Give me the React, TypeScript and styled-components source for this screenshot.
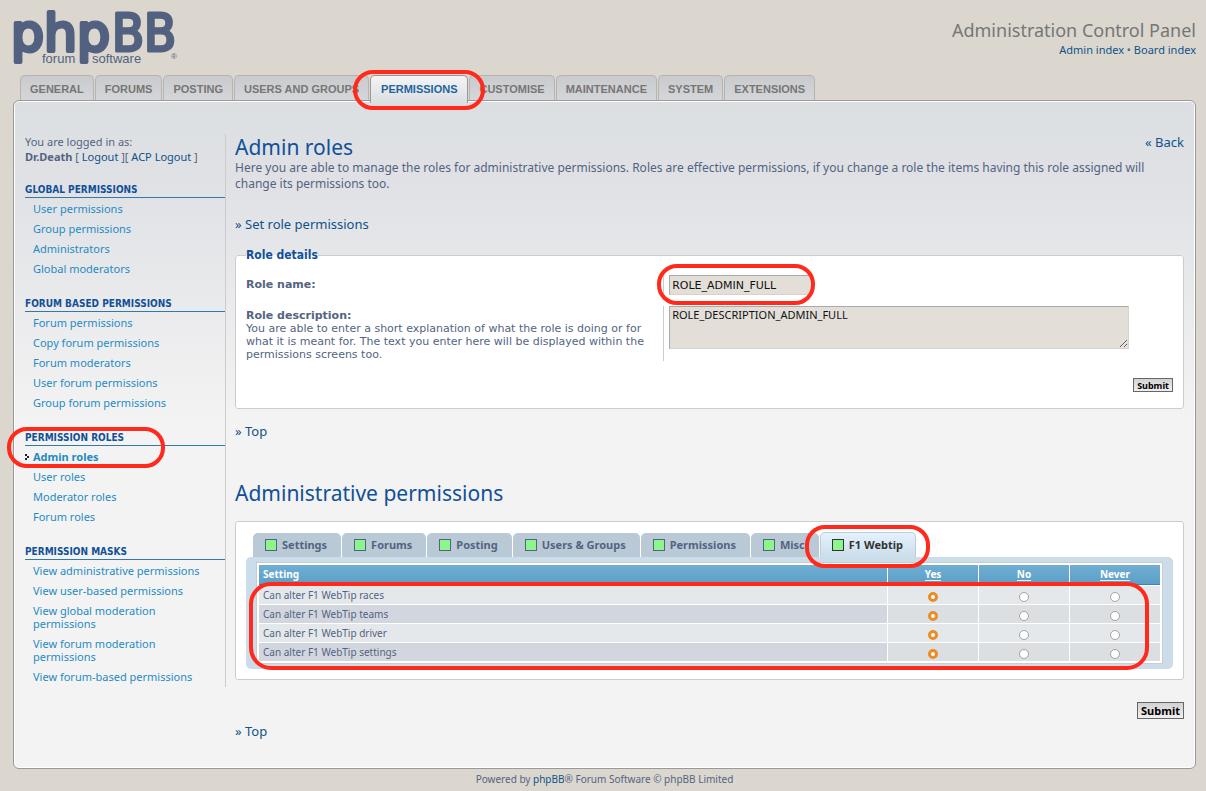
import React from "react";
import styled, { createGlobalStyle, css } from "styled-components";

const humanist = '"Noto Sans", "Open Sans", sans-serif';
const wide = '"DejaVu Sans", sans-serif';
const condensed = '"DejaVu Sans Condensed", "DejaVu Sans", sans-serif';
const arial = '"Liberation Sans", Arial, sans-serif';

const color = {
  page: "#dbd7cf",
  text: "#536482",
  link: "#105289",
  heading: "#115098",
  menuLink: "#1f8bc4",
  border: "#cccccc",
  mark: "#ff2a1c",
};

const GlobalStyle = createGlobalStyle`
  *, *::before, *::after { box-sizing: border-box; }
  body {
    margin: 0;
    background: ${color.page};
    color: ${color.text};
    font: 12px/16px ${humanist};
  }
  a { color: ${color.link}; text-decoration: none; }
  h1, h2, h3, p, ul, dl, dd { margin: 0; padding: 0; }
  ul { list-style: none; }
`;

const Page = styled.div`
  padding: 10px 10px 0 13px;
`;

const Header = styled.header`
  display: flex;
  justify-content: space-between;
  align-items: flex-start;
  height: 65px;
`;

const LogoLink = styled.a`
  display: block;
  line-height: 0;
`;

const HeaderInfo = styled.div`
  padding-top: 9px;
  text-align: right;
  font-size: 11px;
`;

const PanelTitle = styled.h1`
  color: #767676;
  font-size: 18px;
  font-weight: 400;
  line-height: 23px;
`;

const MainTabs = styled.ul`
  display: flex;
  gap: 1px;
  padding-left: 7px;
  height: 25px;
`;

const MainTabItem = styled.li`
  position: relative;
`;

const MainTabLink = styled.a<{ $active?: boolean }>`
  display: block;
  height: 25px;
  padding: 0 9px;
  border: 1px solid #b6b4b1;
  border-bottom: 0;
  border-radius: 5px 5px 0 0;
  background: linear-gradient(#c9cacc, #d5d6da);
  color: #767676;
  font: bold 11px/27px ${arial};
  text-transform: uppercase;
  white-space: nowrap;
  ${(p) =>
    p.$active &&
    css`
      position: relative;
      z-index: 1;
      height: 28px;
      padding: 0 10px;
      border-color: #999999;
      background: linear-gradient(#f4f4f5, #dbdfe2);
      color: #23649f;
    `}
`;

/* Outline that draws attention to a control. */
const Mark = styled.span<{ $inset: string; $radius?: number }>`
  position: absolute;
  inset: ${(p) => p.$inset};
  z-index: 3;
  border: 4px solid ${color.mark};
  border-radius: ${(p) => p.$radius ?? 20}px;
  pointer-events: none;
`;

const Panel = styled.div`
  display: flex;
  gap: 9px;
  min-height: 669px;
  padding: 33px 11px 27px;
  border: 1px solid #999999;
  border-radius: 6px;
  box-shadow: inset 0 0 0 1px #ffffff;
  background: linear-gradient(#dbdfe2, #e0e1e5 80px, #f3f3f3 320px);
`;

const Sidebar = styled.nav`
  flex: 0 0 201px;
  align-self: flex-start;
  border-right: 1px solid ${color.border};
  font-size: 11px;
`;

const Account = styled.p`
  margin-bottom: 18px;
  line-height: 15px;
`;

const MenuGroup = styled.section`
  & + & {
    margin-top: 17px;
  }
`;

const MenuTitle = styled.h3`
  margin-bottom: 1px;
  border-bottom: 1px solid #327aa5;
  color: ${color.heading};
  font: bold 10px/15px ${condensed};
  text-transform: uppercase;
`;

const MenuItem = styled.li<{ $current?: boolean }>`
  position: relative;
  padding: 3px 8px 4px;
  line-height: 13px;
  a {
    color: ${color.menuLink};
    font-weight: ${(p) => (p.$current ? 700 : 400)};
  }
`;

const CurrentArrow = styled.svg`
  position: absolute;
  left: 0;
  top: 7px;
`;

const Marked = styled.div`
  position: relative;
`;

const Main = styled.main`
  flex: 1;
  min-width: 0;
`;

const TitleRow = styled.div`
  display: flex;
  justify-content: space-between;
  align-items: flex-start;
`;

const Title = styled.h2`
  color: ${color.heading};
  font-size: 21px;
  font-weight: 400;
  line-height: 26px;
`;

const JumpLink = styled.a`
  font-size: 13px;
`;

const Row = styled.div<{ $top?: number; $end?: boolean }>`
  display: flex;
  justify-content: ${(p) => (p.$end ? "flex-end" : "flex-start")};
  margin-top: ${(p) => p.$top ?? 0}px;
`;

const Fieldset = styled.fieldset`
  min-width: 0;
  margin: 15px 0 0;
  padding: 10px;
  border: 1px solid ${color.border};
  border-radius: 3px;
  background: #ffffff;
`;

const RoleFieldset = styled(Fieldset)`
  padding: 12px 10px 16px;
`;

const Legend = styled.legend`
  padding: 0;
  color: ${color.heading};
  font: bold 12px/16px ${condensed};
`;

const Field = styled.div`
  display: flex;
  align-items: flex-start;
  & + & {
    margin-top: 11px;
  }
`;

const FieldLabel = styled.div`
  flex: 0 0 45%;
  padding: 3px 12px 0 0;
  font: 11px/13px ${wide};
  label {
    display: block;
    font-weight: 700;
  }
`;

const FieldValue = styled.div`
  position: relative;
  flex: 1;
  align-self: stretch;
  padding-left: 5px;
  border-left: 1px solid ${color.border};
`;

const inputSkin = css`
  display: block;
  margin: 0;
  border: 1px solid #d5d3cf;
  border-top-color: #aaaaaa;
  border-left-color: #aaaaaa;
  border-radius: 0;
  background: #e3dfd8;
  color: #111111;
`;

const TextInput = styled.input`
  ${inputSkin}
  width: 143px;
  height: 20px;
  padding: 2px;
  font: 11px/14px ${wide};
`;

const TextArea = styled.textarea`
  ${inputSkin}
  width: 460px;
  max-width: 100%;
  height: 43px;
  padding: 1px 2px;
  font: 11px/14px ${humanist};
`;

const Submit = styled.button<{ $small?: boolean }>`
  height: ${(p) => (p.$small ? 14 : 17)}px;
  padding: 0 3px;
  border: 1px solid #666666;
  border-radius: 0;
  background: linear-gradient(#d2d2d2, #efefef);
  color: #000000;
  font: bold ${(p) => (p.$small ? "9px/11px" : "11px/14px")} ${humanist};
`;

const CategoryTabs = styled.ul`
  display: flex;
  gap: 1px;
  height: 25px;
  padding: 1px 7px 0;
`;

const CategoryTab = styled.li`
  position: relative;
`;

const CategoryLink = styled.a<{ $active?: boolean }>`
  display: flex;
  align-items: center;
  gap: 5px;
  height: 24px;
  padding: 0 14px 0 12px;
  border-radius: 5px 5px 0 0;
  background: #b9c9d6;
  color: ${color.text};
  font-size: 11px;
  font-weight: 700;
  white-space: nowrap;
  ${(p) =>
    p.$active &&
    css`
      height: 26px;
      margin-top: -1px;
      padding: 0 12px 2px 11px;
      border: 1px solid #c2cdd7;
      border-bottom: 0;
      background: linear-gradient(#e3f2fd, #cbdcea);
      color: #333333;
    `}
`;

const Swatch = styled.span`
  width: 12px;
  height: 12px;
  border: 1px solid currentColor;
  background: #8cf58c;
`;

const TableFrame = styled.div`
  position: relative;
  padding: 5px 10px;
  border-radius: 5px;
  background: #cbdcea;
`;

const PermissionTable = styled.table`
  width: 100%;
  padding: 1px;
  border: 1px solid ${color.border};
  border-spacing: 1px;
  background: #ffffff;
  table-layout: fixed;
`;

const HeadCell = styled.th<{ $option?: boolean }>`
  width: ${(p) => (p.$option ? "90px" : "auto")};
  height: 20px;
  padding: 0 4px;
  border-bottom: 1px solid #3d83ad;
  background: linear-gradient(#70aed3, #5c9fc6);
  color: #ffffff;
  font: bold 10px/19px ${humanist};
  text-align: ${(p) => (p.$option ? "center" : "left")};
  a {
    display: inline-block;
    border-bottom: 1px solid #e8f1f7;
    color: #ffffff;
    line-height: 12px;
  }
`;

const BodyRow = styled.tr`
  --name: #e4e8eb;
  --option: #e4e8eb;
  &:nth-child(even) {
    --name: #d2d6de;
    --option: #dbdfe2;
  }
`;

const NameCell = styled.td`
  height: 18px;
  padding: 0 4px;
  background: var(--name);
  font: 10px/18px ${humanist};
`;

const OptionCell = styled.td`
  height: 18px;
  padding: 2px 0 0;
  background: var(--option);
  line-height: 0;
  text-align: center;
`;

const Radio = styled.input`
  appearance: none;
  width: 10px;
  height: 10px;
  margin: 1px 0 0;
  border: 1px solid #a3a3a3;
  border-radius: 50%;
  background: #ffffff;
  vertical-align: middle;
  &:checked {
    border: 3px solid #ec8c25;
  }
`;

const Footer = styled.footer`
  padding: 3px 0 4px;
  font-size: 10px;
  line-height: 15px;
  text-align: center;
`;

const Logo = () => (
  <svg width="168" height="56" viewBox="0 0 168 56" overflow="visible" role="img" aria-label="phpBB forum software">
    <g fill="#52617f">
      <g fontSize="52" stroke="#52617f" strokeLinejoin="round">
        <text x="-2" y="41" fontFamily="DejaVu Sans" strokeWidth="4">
          php
        </text>
        <text x="99" y="41" fontFamily="DejaVu Sans Condensed" strokeWidth="3">
          BB
        </text>
      </g>
      <g fontFamily="Liberation Sans">
        <text x="29" y="53" fontSize="13">
          forum
        </text>
        <text x="79" y="53" fontSize="13">
          software
        </text>
        <text x="158" y="49" fontSize="8">
          ®
        </text>
      </g>
    </g>
  </svg>
);

const mainTabs = [
  "General",
  "Forums",
  "Posting",
  "Users and Groups",
  "Permissions",
  "Customise",
  "Maintenance",
  "System",
  "Extensions",
];

const menu = [
  {
    title: "Global permissions",
    items: ["User permissions", "Group permissions", "Administrators", "Global moderators"],
  },
  {
    title: "Forum based permissions",
    items: [
      "Forum permissions",
      "Copy forum permissions",
      "Forum moderators",
      "User forum permissions",
      "Group forum permissions",
    ],
  },
  {
    title: "Permission roles",
    items: ["Admin roles", "User roles", "Moderator roles", "Forum roles"],
  },
  {
    title: "Permission masks",
    items: [
      "View administrative permissions",
      "View user-based permissions",
      "View global moderation permissions",
      "View forum moderation permissions",
      "View forum-based permissions",
    ],
  },
];

const categories = ["Settings", "Forums", "Posting", "Users & Groups", "Permissions", "Misc", "F1 Webtip"];
const options = ["Yes", "No", "Never"];
const permissions = ["races", "teams", "driver", "settings"].map((n) => `Can alter F1 WebTip ${n}`);

export default function App() {
  return (
    <>
      <GlobalStyle />
      <Page>
        <Header>
          <LogoLink href="#">
            <Logo />
          </LogoLink>
          <HeaderInfo>
            <PanelTitle>Administration Control Panel</PanelTitle>
            <p>
              <a href="#">Admin index</a> • <a href="#">Board index</a>
            </p>
          </HeaderInfo>
        </Header>

        <MainTabs>
          {mainTabs.map((tab) => {
            const active = tab === "Permissions";
            return (
              <MainTabItem key={tab}>
                <MainTabLink href="#" $active={active}>
                  {tab}
                </MainTabLink>
                {active && <Mark $inset="-5px -17px -10px" />}
              </MainTabItem>
            );
          })}
        </MainTabs>

        <Panel>
          <Sidebar>
            <Account>
              You are logged in as:
              <br />
              <strong>Dr.Death</strong> [ <a href="#">Logout</a> ][ <a href="#">ACP Logout</a> ]
            </Account>
            {menu.map((group) => (
              <MenuGroup key={group.title}>
                <Marked>
                  <MenuTitle>{group.title}</MenuTitle>
                  {group.title === "Permission roles" && <Mark $inset="-3px 60px -22px -18px" />}
                </Marked>
                <ul>
                  {group.items.map((item) => {
                    const current = item === "Admin roles";
                    return (
                      <MenuItem key={item} $current={current}>
                        {current && (
                          <CurrentArrow width="5" height="7" viewBox="0 0 5 7" aria-hidden="true">
                            <path d="M0 0h2v2H0zM2 2h2v2H2zM0 4h2v2H0z" fill="#222222" />
                          </CurrentArrow>
                        )}
                        <a href="#">{item}</a>
                      </MenuItem>
                    );
                  })}
                </ul>
              </MenuGroup>
            ))}
          </Sidebar>

          <Main>
            <TitleRow>
              <Title>Admin roles</Title>
              <JumpLink href="#">« Back</JumpLink>
            </TitleRow>
            <p>
              Here you are able to manage the roles for administrative permissions. Roles are effective permissions, if
              you change a role the items having this role assigned will change its permissions too.
            </p>
            <Row $top={24}>
              <JumpLink href="#">» Set role permissions</JumpLink>
            </Row>

            <RoleFieldset>
              <Legend>Role details</Legend>
              <Field>
                <FieldLabel>
                  <label htmlFor="role-name">Role name:</label>
                </FieldLabel>
                <FieldValue>
                  <TextInput id="role-name" defaultValue="ROLE_ADMIN_FULL" />
                  <Mark $inset="-11px auto -10px -7px" style={{ width: 158 }} />
                </FieldValue>
              </Field>
              <Field>
                <FieldLabel>
                  <label htmlFor="role-description">Role description:</label>
                  You are able to enter a short explanation of what the role is doing or for what it is meant for. The
                  text you enter here will be displayed within the permissions screens too.
                </FieldLabel>
                <FieldValue>
                  <TextArea id="role-description" defaultValue="ROLE_DESCRIPTION_ADMIN_FULL" />
                </FieldValue>
              </Field>
              <Row $top={17} $end>
                <Submit type="button" $small>
                  Submit
                </Submit>
              </Row>
            </RoleFieldset>

            <Row $top={14}>
              <JumpLink href="#">» Top</JumpLink>
            </Row>

            <Row $top={41}>
              <Title>Administrative permissions</Title>
            </Row>
            <Fieldset>
              <CategoryTabs>
                {categories.map((name) => {
                  const active = name === "F1 Webtip";
                  return (
                    <CategoryTab key={name}>
                      <CategoryLink href="#" $active={active}>
                        <Swatch />
                        {name}
                      </CategoryLink>
                      {active && <Mark $inset="-8px -14px -11px -15px" />}
                    </CategoryTab>
                  );
                })}
              </CategoryTabs>
              <TableFrame>
                <PermissionTable>
                  <thead>
                    <tr>
                      <HeadCell scope="col">Setting</HeadCell>
                      {options.map((o) => (
                        <HeadCell key={o} scope="col" $option>
                          <a href="#">{o}</a>
                        </HeadCell>
                      ))}
                    </tr>
                  </thead>
                  <tbody>
                    {permissions.map((name) => (
                      <BodyRow key={name}>
                        <NameCell>{name}</NameCell>
                        {options.map((o) => (
                          <OptionCell key={o}>
                            <Radio type="radio" name={name} aria-label={`${name}: ${o}`} defaultChecked={o === "Yes"} />
                          </OptionCell>
                        ))}
                      </BodyRow>
                    ))}
                  </tbody>
                </PermissionTable>
                <Mark $inset="25px 24px -1px 3px" $radius={22} />
              </TableFrame>
            </Fieldset>

            <Row $top={22} $end>
              <Submit type="button">Submit</Submit>
            </Row>
            <Row $top={4}>
              <JumpLink href="#">» Top</JumpLink>
            </Row>
          </Main>
        </Panel>

        <Footer>
          Powered by <a href="#">phpBB</a>® Forum Software © phpBB Limited
        </Footer>
      </Page>
    </>
  );
}
